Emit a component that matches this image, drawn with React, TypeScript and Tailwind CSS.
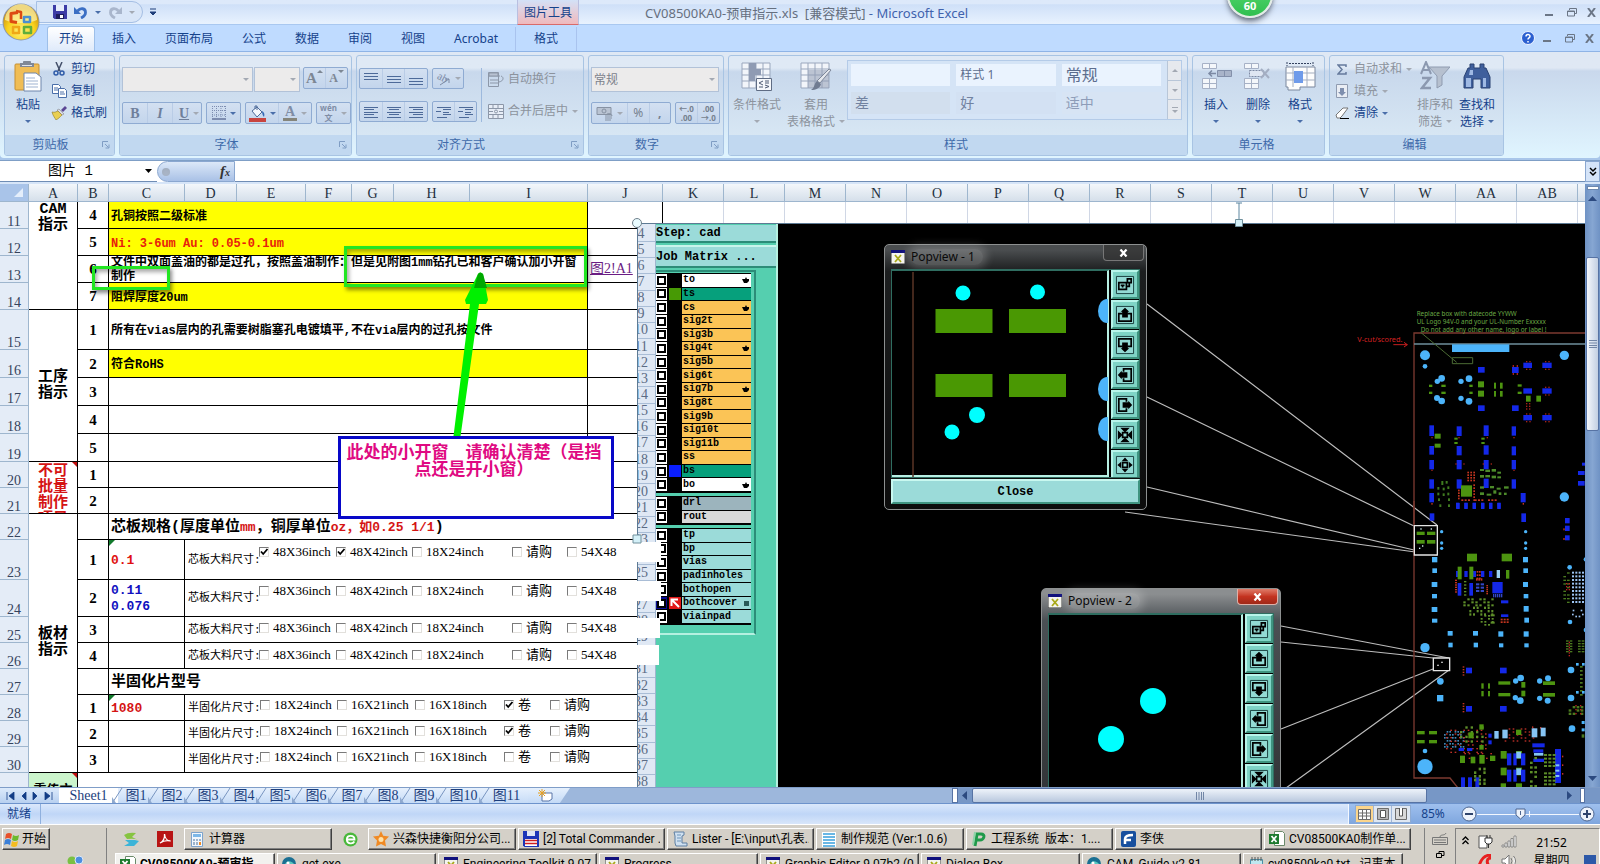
import React from "react";

const ui = "font-['Noto_Sans','Noto_Sans_CJK_SC',sans-serif]";
const cellFont = "font-['Liberation_Mono','Noto_Sans_CJK_SC',monospace]";
const serif = "font-['Liberation_Serif','Noto_Sans_CJK_SC',serif]";

/* ---------- small shared pieces ---------- */

const Caret = ({ className = "fill-[#4a6ea9]" }: { className?: string }) => (
  <svg width="6" height="3" viewBox="0 0 6 3" className={`shrink-0 ${className}`}>
    <path d="M0 0h6L3 3z" />
  </svg>
);

const dim = "fill-[#a3a9b3]";

const Lines = ({ rows }: { rows: number[][] }) => (
  <svg width="16" height="16" viewBox="0 0 16 16" className="shrink-0">
    {rows.map(([x, y, w], i) => (
      <rect key={i} x={x} y={y} width={w} height="1" fill="#4d6a99" />
    ))}
  </svg>
);

const Launcher = () => (
  <svg width="8" height="8" viewBox="0 0 8 8" fill="none" stroke="#7f9dc4" className="ml-1.5">
    <path d="M.5 6V.5H6M3 3l3.500 3.500M7 3.500V7H3.500" />
  </svg>
);

const Group = ({ label, className, launcher, children }: { label: string; className: string; launcher?: boolean; children: React.ReactNode }) => (
  <section className={`flex shrink-0 flex-col overflow-hidden rounded-[3px] border border-[#a8c4e3] bg-linear-to-b from-[#dfe9f5] from-12% via-[#c8d8ec] via-16% to-[#dcebf6] ${className}`}>
    <div className="min-h-0 flex-1">{children}</div>
    <div className="flex h-5 items-center bg-[#c1d8f0] pr-1 text-[12px] text-[#3e6aaa]">
      <h2 className="flex-1 text-center leading-5">{label}</h2>
      {launcher && <Launcher />}
    </div>
  </section>
);

const BtnBox = ({ className = "", children }: { className?: string; children: React.ReactNode }) => (
  <div className={`flex shrink-0 items-stretch divide-x divide-[#b9cce6] rounded-[2px] border border-[#8fabd2] bg-linear-to-b from-[#d3e0f1] to-[#c3d5ec] ${className}`}>{children}</div>
);

const IconBtn = ({ label, className = "", children }: { label: string; className?: string; children: React.ReactNode }) => (
  <button type="button" aria-label={label} className={`flex flex-1 items-center justify-center gap-1 ${className}`}>{children}</button>
);

const BigBtn = ({ icon, lines, muted, className, caretInline }: { icon: React.ReactNode; lines: string[]; muted?: boolean; className: string; caretInline?: boolean }) => (
  <button type="button" className={`flex shrink-0 flex-col items-center pt-1 text-[12px] leading-[17px] ${muted ? "text-[#8c939d]" : "text-[#15428b]"} ${className}`}>
    <span className="flex h-8 items-center">{icon}</span>
    <span className="mt-1 whitespace-nowrap">{lines[0]}</span>
    <span className="flex h-[17px] items-center gap-1 whitespace-nowrap">
      {lines[1]}
      {(caretInline || !lines[1]) && <Caret className={muted ? dim : "fill-[#4a6ea9]"} />}
    </span>
  </button>
);

const SmallBtn = ({ icon, text, muted, caret }: { icon: React.ReactNode; text: string; muted?: boolean; caret?: boolean }) => (
  <button type="button" className={`flex h-[22px] items-center gap-1 whitespace-nowrap text-[12px] leading-4 ${muted ? "text-[#8c939d]" : "text-[#15428b]"}`}>
    <span className="flex w-4 justify-center">{icon}</span>
    {text}
    {caret && <Caret className={muted ? dim : "fill-[#4a6ea9]"} />}
  </button>
);

/* ---------- ribbon icons ---------- */

const OfficeLogo = () => (
  <svg width="38" height="38" viewBox="0 0 38 38">
    <defs>
      <radialGradient id="orb" cx="50%" cy="75%" r="65%">
        <stop offset="0" stopColor="#fff27a" />
        <stop offset=".6" stopColor="#f8d11c" />
        <stop offset="1" stopColor="#c98f12" />
      </radialGradient>
    </defs>
    <circle cx="19" cy="19" r="18.5" fill="#8d98ab" />
    <circle cx="19" cy="19" r="17.5" fill="url(#orb)" />
    <path d="M3 17a16 16 0 0 1 32 0c-8 4-24 4-32 0z" fill="#fff6b0" opacity=".7" />
    <g fill="none" strokeWidth="3" strokeLinejoin="round">
      <path d="M16 9.500l-7 1v8l6 1" stroke="#dd4a12" />
      <path d="M14 8l5 1v7" stroke="#dd4a12" strokeWidth="2.500" />
      <path d="M22 14h6v5h-6z" stroke="#4b8fd0" strokeWidth="2.500" />
      <path d="M11 24h6v6h-6z" stroke="#f0a818" strokeWidth="2.500" />
      <path d="M22 24h7v6h-7z" stroke="#5fae3c" strokeWidth="2.500" />
    </g>
  </svg>
);

const Floppy = ({ size = 14 }: { size?: number }) => (
  <svg width={size} height={size} viewBox="0 0 14 14">
    <path d="M0 0h14v14H1.500L0 12.500z" fill="#3c3ca6" />
    <path d="M3 0h8v6H3z" fill="#e8eefb" />
    <path d="M3 9h8v5H3z" fill="#1d1d5c" />
    <path d="M7 10h3v3H7z" fill="#fff" />
  </svg>
);

const Undo = ({ flip, color }: { flip?: boolean; color: string }) => (
  <svg width="14" height="13" viewBox="0 0 14 13" className={flip ? "-scale-x-100" : ""}>
    <path d="M0 1v7h7z" fill={color} />
    <path d="M3.500 5C6.500 1.500 11.500 2 11.500 6.500c0 2.500-1.500 4-4.500 5.500" fill="none" stroke={color} strokeWidth="2.800" />
  </svg>
);

const PasteIcon = () => (
  <svg width="28" height="31" viewBox="0 0 28 31">
    <rect x="1" y="3" width="24" height="26" rx="1" fill="#f0bd55" stroke="#c58f33" />
    <path d="M6 2h3a4 4 0 0 1 8 0h3v4H6z" fill="#7f8896" />
    <path d="M8 4h10v1H8z" fill="#dfe4ec" />
    <path d="M10 12h12l5 4v14H10z" fill="#fff" stroke="#6f86ac" />
    <path d="M12 17h9M12 20h12M12 23h12M12 26h12" stroke="#9fb3d1" />
  </svg>
);

const Scissors = () => (
  <svg width="12" height="14" viewBox="0 0 12 14" fill="none" stroke="#2f5ba8">
    <path d="M3 0l4 9M9 0L5 9" stroke="#44506a" strokeWidth="1.500" />
    <circle cx="3" cy="11" r="2" strokeWidth="1.500" />
    <circle cx="9" cy="11" r="2" strokeWidth="1.500" />
  </svg>
);

const CopyIcon = () => (
  <svg width="15" height="14" viewBox="0 0 15 14" fill="#fff" stroke="#4a6ea9">
    <path d="M.5.500h6l2 2v7h-8z" />
    <path d="M2 4h4M2 6h4" />
    <path d="M6.500 4.500h6l2 2v7h-8z" />
    <path d="M8 8h4M8 10h5" />
  </svg>
);

const Brush = () => (
  <svg width="16" height="14" viewBox="0 0 16 14">
    <path d="M10 4l4-4 2 2-4 4z" fill="#5b4694" />
    <path d="M8 3l5 5-2 1-5-5z" fill="#d9d9e8" stroke="#777" strokeWidth=".5" />
    <path d="M1 6c3 1 5-1 6-1l4 4c-2 2-4 4-6 5-1-2-3-4-4-8z" fill="#e9cf52" stroke="#8f7b26" strokeWidth=".6" />
  </svg>
);

const Bucket = () => (
  <svg width="17" height="17" viewBox="0 0 17 17">
    <path d="M3 6l5-4 5 5-5 5z" fill="#f5f8fd" stroke="#4d6a99" />
    <path d="M6 4V1h2v4" fill="none" stroke="#4d6a99" />
    <path d="M13 6c2 1 3 3 2 6-1-1-2-3-2-6z" fill="#3469b5" />
    <rect x="0" y="13" width="17" height="4" fill="#c8443f" />
  </svg>
);

const GridIcon = ({ brush }: { brush?: boolean }) => (
  <svg width="32" height="30" viewBox="0 0 32 30">
    <path d="M1 2h28v25H1z" fill="#f2f5fa" stroke="#9aa7bd" />
    <path d="M8 2v25M15 2v25M22 2v25M1 8h28M1 14h28M1 20h28" stroke="#9aa7bd" />
    {brush ? (
      <>
        <path d="M8 9h21v18H8z" fill="#8f9bb3" opacity=".55" />
        <path d="M31 9L20 22l-3-2L29 8z" fill="#e3e6ec" stroke="#7d879a" />
        <path d="M17 20l4 3c-1 4-5 6-10 6 4-2 3-7 6-9z" fill="#707b91" />
      </>
    ) : (
      <>
        <path d="M8 2h7v6h5v6h-6v6H8z" fill="#8f9bb3" />
        <path d="M15.500 17.500h15v12h-15z" fill="#f6f8fb" stroke="#5f6c84" />
        <path d="M22 20l-4 2 4 2M18 26h4M24 20h4M24 22h4M24 24l4 1.500L24 27" fill="none" stroke="#4e5a73" />
      </>
    )}
  </svg>
);

const CellsIcon = ({ kind }: { kind: "insert" | "delete" | "format" }) => (
  <svg width="31" height="30" viewBox="0 0 31 30">
    {kind === "format" ? (
      <>
        <path d="M2 1v4M28 1v4M4 2.500h22" stroke="#33415e" strokeDasharray="2 1" />
        <path d="M1 6h29v20H15v3H3v-3H1z" fill="#fdfdfd" stroke="#7b879d" />
        <path d="M8 6v20M22 6v20M1 12h29M1 19h29" stroke="#a3adbf" />
        <path d="M9 10h9v12H9z" fill="#6f9bea" />
      </>
    ) : (
      <>
        <path d="M1.500 2.500h14v5h-14zM1.500 17.500h14v10h-14zM8.500 2.500v5M8.500 17.500v10M1.500 22.500h14" fill="#f4f7fb" stroke="#a6b1c6" />
        {kind === "insert" ? (
          <>
            <path d="M16.500 9.500h14v6h-14zM23.500 9.500v6" fill="#a9b4c9" stroke="#8390aa" />
            <path d="M15 12.500H8m3-3l-3 3 3 3" fill="none" stroke="#7c89a3" strokeWidth="1.500" />
          </>
        ) : (
          <>
            <path d="M6.500 9.500h14v6h-14z" fill="#dfe6f2" stroke="#7c89a3" strokeDasharray="2 1" />
            <path d="M18 8l8 9M26 8l-8 9" stroke="#a4aec2" strokeWidth="2" />
          </>
        )}
      </>
    )}
  </svg>
);

const SortIcon = () => (
  <svg width="30" height="30" viewBox="0 0 30 30">
    <path d="M1 13L6 1l5 12M3 9h6" fill="none" stroke="#8c99b0" strokeWidth="2" />
    <path d="M2 17h8L2 27h9" fill="none" stroke="#8c99b0" strokeWidth="2.500" />
    <path d="M9 6h21l-8 9v9l-5 3V15z" fill="#b6c0cf" stroke="#8f9bb0" />
  </svg>
);

const Binoculars = () => (
  <svg width="28" height="26" viewBox="0 0 28 26">
    <path d="M7 1h4v4h6V1h4v4h2l4 9v11h-9v-9h-8v9H1V14l4-9h2z" fill="#3f5f9c" stroke="#2a4272" />
    <path d="M3 15h5v9H3zM20 15h3v9h-3zM7 7h3v5H6z" fill="#9fb9e3" />
  </svg>
);

/* ---------- title and tabs ---------- */

const TitleBar = () => (
  <header className="relative flex h-[25px] shrink-0 items-center border-b border-[#a9c8f0] bg-linear-to-b from-[#dde9fa] from-15% via-[#cfe0f8] via-20% to-[#e8f2fe]">
    <div className="absolute left-0.5 top-[3px] z-10 rounded-full">
      <button type="button" aria-label="Office" className="block rounded-full">
        <OfficeLogo />
      </button>
    </div>
    <div className="ml-9 flex h-[22px] w-[107px] items-center gap-[7px] rounded-r-full border border-[#a5bfe4] bg-[#d9e6f8] pl-4">
      <Floppy />
      <Undo color="#3c6fc4" />
      <Caret />
      <Undo flip color="#a9b6cc" />
      <Caret className={dim} />
    </div>
    <svg width="8" height="8" viewBox="0 0 8 8" className="ml-1.5">
      <path d="M1 1h6M1 4h6L4 7z" stroke="#1f3f7a" fill="#1f3f7a" strokeWidth="1" />
    </svg>
    <div className="absolute left-[517px] top-0 h-[25px] w-[62px] border-x border-b border-b-[#d86a6a] border-x-[#b9bfe0] bg-linear-to-b from-[#d3e1f7] to-[#efb9bd] text-center text-[12px] leading-[25px] text-[#15428b]">图片工具</div>
    <h1 className="absolute left-[645px] top-0 whitespace-pre text-[13px] leading-[27px] text-[#66707f]">
      CV08500KA0-预审指示.xls&nbsp; [兼容模式] <span className="text-[#4163ad]">- Microsoft Excel</span>
    </h1>
    <div className="absolute left-[1227px] top-[-28px] flex h-[46px] w-[46px] items-end justify-center rounded-full border-2 border-[#e4ece6] bg-linear-to-b from-[#5fe07a] to-[#2fbf4f] pb-0.5 text-[11px] font-bold leading-4 text-white shadow-md shadow-gray-500">60</div>
    <div className="ml-auto">
      <WinBtns />
    </div>
  </header>
);

const WinBtns = () => (
  <div className="flex items-center gap-2.5 pr-1">
    <button type="button" aria-label="Minimize" className="flex h-3 w-3 items-end"><span className="mb-0.5 h-0.5 w-2 bg-[#6b7686]" /></button>
    <button type="button" aria-label="Restore">
      <svg width="10" height="9" viewBox="0 0 10 9" fill="none" stroke="#6b7686"><path d="M2.500 2V.500h7v5H8M.5 3h7v5h-7zM0 3.500h8" /></svg>
    </button>
    <button type="button" aria-label="Close">
      <svg width="9" height="9" viewBox="0 0 9 9"><path d="M1 0l7 9M8 0L1 9" stroke="#6b7686" strokeWidth="2" /></svg>
    </button>
  </div>
);

const TabRow = () => (
  <nav className="flex h-[27px] shrink-0 items-end gap-[5px] border-b border-[#8fb4e6] bg-[#bfdbff] pl-[47px] text-[12px] leading-6 text-[#15428b]">
    <a href="#home" className="h-[25px] rounded-t-[3px] border border-b-0 border-[#9dbfe9] bg-linear-to-b from-white to-[#dfeafa] px-[11px] text-[#15428b]">开始</a>
    {["插入", "页面布局", "公式", "数据", "审阅", "视图", "Acrobat"].map((t) => (
      <a key={t} href="#tab" className="px-3">{t}</a>
    ))}
    <a href="#format" className="w-[62px] border-x border-[#a9c3ee] text-center">格式</a>
    <div className="ml-auto flex h-[26px] items-center gap-2 pr-0.5">
      <svg width="14" height="14" viewBox="0 0 14 14">
        <circle cx="7" cy="7" r="6.500" fill="#2b5fd0" stroke="#f0f4ff" />
        <path d="M5 5.500C5 3 9 3 9 5.300 9 7 7 6.800 7 8.500M7 10v1.500" stroke="#fff" strokeWidth="1.500" fill="none" />
      </svg>
      <WinBtns />
    </div>
  </nav>
);

/* ---------- ribbon ---------- */

const GalleryCell = ({ children, className = "" }: { children?: React.ReactNode; className?: string }) => (
  <button type="button" className={`flex h-[22px] items-center pl-1 text-left leading-5 ${className}`}>{children}</button>
);

const Ribbon = () => (
  <div className="flex h-[109px] shrink-0 border-b border-[#7f9fc6] bg-[#a9c6ea] pb-0.5">
    <div className="flex min-w-0 flex-1 gap-1 overflow-hidden rounded-b-[4px] bg-linear-to-b from-[#dfe8f4] from-15% via-[#c9d8ec] via-18% to-[#e0f5ff] pb-0.5 pl-1 pt-[3px]">
      <Group label="剪贴板" launcher className="w-[111px]">
        <div className="flex">
          <BigBtn icon={<PasteIcon />} lines={["粘贴"]} className="w-[46px]" />
          <div className="flex flex-col pt-0.5">
            <SmallBtn icon={<Scissors />} text="剪切" />
            <SmallBtn icon={<CopyIcon />} text="复制" />
            <SmallBtn icon={<Brush />} text="格式刷" />
          </div>
        </div>
      </Group>

      <Group label="字体" launcher className="w-[233px]">
        <div className="flex flex-col gap-2.5 pl-0.5 pt-[11px]">
          <div className="flex h-[25px] items-start gap-px">
            <div className="relative w-[131px]">
              <select aria-label="字体" className="block h-[25px] w-full appearance-none border border-[#b2c2d8] bg-[#ecebeb]"><option> </option></select>
              <span className="pointer-events-none absolute right-1 top-[11px]"><Caret className={dim} /></span>
            </div>
            <div className="relative w-[46px]">
              <select aria-label="字号" className="block h-[25px] w-full appearance-none border border-[#b2c2d8] bg-[#ecebeb]"><option> </option></select>
              <span className="pointer-events-none absolute right-1 top-[11px]"><Caret className={dim} /></span>
            </div>
            <BtnBox className="ml-0.5 h-[22px] w-[45px]">
              <IconBtn label="增大字号"><span className={`${serif} flex text-[15px] font-bold leading-4 text-[#7d8794]`}>A<Caret className="rotate-180 fill-[#7d8794]" /></span></IconBtn>
              <IconBtn label="减小字号"><span className={`${serif} flex text-[12px] font-bold leading-4 text-[#7d8794]`}>A<Caret className="fill-[#7d8794]" /></span></IconBtn>
            </BtnBox>
          </div>
          <div className={`${serif} flex h-[22px] gap-1 text-[14px] font-bold text-[#6f7f9b]`}>
            <BtnBox className="w-[80px]">
              <IconBtn label="加粗">B</IconBtn>
              <IconBtn label="倾斜"><i>I</i></IconBtn>
              <IconBtn label="下划线" className="pl-1"><u>U</u><Caret className={dim} /></IconBtn>
            </BtnBox>
            <BtnBox className="w-[35px]">
              <IconBtn label="边框">
                <svg width="14" height="14" viewBox="0 0 14 14" fill="none" stroke="#7d8db0"><path d="M.5 0v12M4.500 0v12M9 0v12M13.500 0v12M0 .500h14M0 4.500h14M0 9h14" strokeDasharray="1 1" /><path d="M0 13h14" strokeWidth="2" /></svg>
                <Caret />
              </IconBtn>
            </BtnBox>
            <BtnBox className="w-[67px]">
              <IconBtn label="填充颜色"><Bucket /><Caret /></IconBtn>
              <IconBtn label="字体颜色"><span className="border-b-[3px] border-[#85857b] px-0.5 leading-[13px] text-[#7f8da6]">A</span><Caret className={dim} /></IconBtn>
            </BtnBox>
            <BtnBox className="w-[35px]">
              <IconBtn label="拼音"><span className={`${ui} flex flex-col text-[8px] font-bold leading-[10px] text-[#7f8da6]`}><span>wén</span><span className="text-center">文</span></span><Caret className={dim} /></IconBtn>
            </BtnBox>
          </div>
        </div>
      </Group>

      <Group label="对齐方式" launcher className="w-[228px]">
        <div className="flex pl-0.5 pt-3">
          <div className="flex flex-col gap-3">
            <div className="flex h-[21px] gap-1">
              <BtnBox className="w-[69px]">
                <IconBtn label="顶端对齐"><Lines rows={[[1, 2, 14], [1, 5, 14], [1, 8, 14]]} /></IconBtn>
                <IconBtn label="垂直居中"><Lines rows={[[1, 5, 14], [1, 8, 14], [1, 11, 14]]} /></IconBtn>
                <IconBtn label="底端对齐"><Lines rows={[[1, 7, 14], [1, 10, 14], [1, 13, 14]]} /></IconBtn>
              </BtnBox>
              <BtnBox className="w-8">
                <IconBtn label="方向">
                  <svg width="15" height="14" viewBox="0 0 15 14" fill="none" stroke="#7d8aa5"><text x="1" y="8" transform="rotate(28 4 6)" fontSize="11" fill="#7d8aa5" stroke="none" fontFamily="Liberation Serif">ab</text><path d="M4 13l9-6m-4 0h4v4" /></svg>
                  <Caret className={dim} />
                </IconBtn>
              </BtnBox>
            </div>
            <div className="flex h-[21px] gap-1">
              <BtnBox className="w-[69px]">
                <IconBtn label="左对齐"><Lines rows={[[1, 3, 14], [1, 5, 10], [1, 8, 14], [1, 10, 10], [1, 13, 14]]} /></IconBtn>
                <IconBtn label="居中"><Lines rows={[[1, 3, 14], [3, 5, 10], [1, 8, 14], [3, 10, 10], [1, 13, 14]]} /></IconBtn>
                <IconBtn label="右对齐"><Lines rows={[[1, 3, 14], [5, 5, 10], [1, 8, 14], [5, 10, 10], [1, 13, 14]]} /></IconBtn>
              </BtnBox>
              <BtnBox className="w-[45px]">
                <IconBtn label="减少缩进"><Lines rows={[[1, 3, 14], [7, 5, 8], [0, 7, 5], [7, 8, 6], [7, 10, 8], [1, 13, 10]]} /></IconBtn>
                <IconBtn label="增加缩进"><Lines rows={[[1, 3, 14], [7, 5, 8], [0, 7, 5], [7, 8, 6], [7, 10, 8], [1, 13, 10]]} /></IconBtn>
              </BtnBox>
            </div>
          </div>
          <div className="ml-1 border-l border-[#9db9dd] pl-1.5">
            <div className="flex flex-col gap-2.5">
              <SmallBtn muted text="自动换行" icon={<svg width="16" height="15" viewBox="0 0 16 15" fill="none" stroke="#8c97a8"><path d="M.5.500h10v14H.5zM0 4h12M2 8h8M2 11h8M13 4c3 1 3 5-2 6" strokeWidth="1" /><path d="M1 1h9v3H1z" fill="#b8c2d2" /></svg>} />
              <SmallBtn muted caret text="合并后居中" icon={<svg width="16" height="15" viewBox="0 0 16 15" fill="#e7edf6" stroke="#8c97a8"><path d="M.5.500h15v14H.5zM.5 4.500h15M.5 10.500h15M5 .500v4M10 .500v4M5 10.500v4M10 10.500v4M1 7.500h4M11 7.500h4" /><circle cx="8" cy="7.500" r="1.500" fill="none" /></svg>} />
            </div>
          </div>
        </div>
      </Group>

      <Group label="数字" launcher className="w-[136px]">
        <div className="flex flex-col gap-2.5 pl-0.5 pt-[11px]">
          <div className="relative w-[128px]">
            <select aria-label="数字格式" className="block h-[25px] w-full appearance-none border border-[#b2c2d8] bg-[#ecebeb] pl-0.5 text-[12px] leading-5 text-[#7c828c]"><option>常规</option></select>
            <span className="pointer-events-none absolute right-1 top-[11px]"><Caret className={dim} /></span>
          </div>
          <div className="flex h-[22px] gap-1 text-[12px] text-[#76818f]">
            <BtnBox className="w-[80px]">
              <IconBtn label="会计数字格式" className="px-1">
                <svg width="17" height="15" viewBox="0 0 17 15" fill="none" stroke="#8792a3"><path d="M1 1.500h14v7H1z" fill="#b9c3d2" /><circle cx="8" cy="5" r="2" /><path d="M9 10h7M9 12h7M9 14h6M11 8c3-1 5 0 5 2" /></svg>
                <Caret className={dim} />
              </IconBtn>
              <IconBtn label="百分比">%</IconBtn>
              <IconBtn label="千位分隔"><b>,</b></IconBtn>
            </BtnBox>
            <BtnBox className="w-[45px] text-[8px] font-bold leading-[9px]">
              <IconBtn label="增加小数位"><span>←.0<br />.00</span></IconBtn>
              <IconBtn label="减少小数位"><span>.00<br />→.0</span></IconBtn>
            </BtnBox>
          </div>
        </div>
      </Group>

      <Group label="样式" className="w-[460px]">
        <div className="flex">
          <BigBtn muted icon={<GridIcon />} lines={["条件格式"]} className="w-14" />
          <BigBtn muted caretInline icon={<GridIcon brush />} lines={["套用", "表格格式"]} className="w-[62px]" />
          <div className="mt-1 flex h-[60px] w-[335px] border border-[#b4cbe8] bg-[#d5e4f6]">
            <div className="grid flex-1 grid-cols-3 content-start gap-x-1.5 gap-y-1.5 p-[3px] pr-1.5 text-[#5d6e8e]">
              <GalleryCell className="bg-[#eaf3fe]" />
              <GalleryCell className="bg-[#eaf3fe] text-[12px]">样式 1</GalleryCell>
              <GalleryCell className="bg-[#eaf3fe] text-[16px]">常规</GalleryCell>
              <GalleryCell className="bg-[#d2dfee] text-[14px] text-[#7182a0]">差</GalleryCell>
              <GalleryCell className="bg-[#d3e1f3] text-[14px] text-[#7182a0]">好</GalleryCell>
              <GalleryCell className="bg-[#d7e4f4] text-[14px] text-[#8d9cb8]">适中</GalleryCell>
            </div>
            <div className="flex w-[14px] flex-col divide-y divide-[#b8c6d8] border-l border-[#b8c6d8] bg-[#e6e9ee]">
              <button type="button" aria-label="上一行" className="flex flex-1 items-center justify-center"><Caret className="rotate-180 fill-[#a3a9b3]" /></button>
              <button type="button" aria-label="下一行" className="flex flex-1 items-center justify-center"><Caret className={dim} /></button>
              <button type="button" aria-label="其他" className="flex flex-1 flex-col items-center justify-center gap-0.5"><span className="h-px w-1.5 bg-[#a3a9b3]" /><Caret className={dim} /></button>
            </div>
          </div>
        </div>
      </Group>

      <Group label="单元格" className="w-[133px]">
        <div className="flex pl-0.5">
          <BigBtn icon={<CellsIcon kind="insert" />} lines={["插入"]} className="w-[42px]" />
          <BigBtn icon={<CellsIcon kind="delete" />} lines={["删除"]} className="w-[42px]" />
          <BigBtn icon={<CellsIcon kind="format" />} lines={["格式"]} className="w-[42px]" />
        </div>
      </Group>

      <Group label="编辑" className="w-[175px]">
        <div className="flex pl-1">
          <div className="flex w-20 flex-col items-start pt-0.5">
            <SmallBtn muted caret text="自动求和" icon={<svg width="10" height="11" viewBox="0 0 10 11"><path d="M9 3V1H1l4 4.500L1 10h8V8" fill="none" stroke="#667a9c" strokeWidth="1.500" /></svg>} />
            <SmallBtn muted caret text="填充" icon={<svg width="12" height="14" viewBox="0 0 12 14"><path d="M.5.500h11v13H.5z" fill="#e9edf4" stroke="#8f9bb0" /><path d="M4 4h4v4h2l-4 4-4-4h2z" fill="#7f8fae" /></svg>} />
            <SmallBtn caret text="清除" icon={<svg width="14" height="12" viewBox="0 0 14 12"><path d="M1 8l7-7h5l-6 8-2 2H2z" fill="#fff" stroke="#777" /><path d="M5 11.500h9" stroke="#000" /></svg>} />
          </div>
          <BigBtn muted caretInline icon={<SortIcon />} lines={["排序和", "筛选"]} className="w-[42px]" />
          <BigBtn caretInline icon={<Binoculars />} lines={["查找和", "选择"]} className="w-[42px]" />
        </div>
      </Group>
    </div>
  </div>
);

const FormulaBar = () => (
  <div className="flex h-[23px] shrink-0 items-stretch border-b-2 border-[#d6e5f8] bg-white">
    <div className="flex w-[157px] items-center border-b border-[#6f8db5] pl-12 pr-[5px]">
      <input aria-label="名称框" defaultValue="图片 1" className={`min-w-0 flex-1 bg-transparent text-[14px] leading-4 text-black outline-none ${cellFont}`} />
      <svg width="7" height="4" viewBox="0 0 7 4"><path d="M0 0h7L3.500 4z" /></svg>
    </div>
    <div className="flex w-[78px] items-center justify-between rounded-l-full border border-[#8aa7d0] bg-linear-to-b from-[#dce8f8] to-[#a9c1e6] px-1">
      <span className="h-2 w-2 rounded-full bg-[#aab6c8] shadow-inner" />
      <button type="button" aria-label="插入函数" className={`${serif} flex items-center pb-0.5 text-[15px] font-bold italic leading-4 text-[#333]`}>f<span className="pt-1 text-[10px] leading-3">x</span></button>
    </div>
    <input aria-label="编辑栏" className="min-w-0 flex-1 border-b border-[#6f8db5] bg-white outline-none" />
    <button type="button" aria-label="展开编辑栏" className="flex w-[15px] items-center justify-center border border-[#8aa7d0] bg-[#d5e4f8]">
      <svg width="8" height="10" viewBox="0 0 8 10" fill="none" stroke="#000" strokeWidth="1.500"><path d="M1 1l3 3 3-3M1 5l3 3 3-3" /></svg>
    </button>
  </div>
);

/* ---------- worksheet ---------- */

const k = "border-black";
const num = `border-b border-r ${k} p-0 text-center ${serif} text-[15px] font-bold leading-5`;

const RowHead = ({ n }: { n: number | string }) => (
  <th scope="row" className={`border-b border-r border-[#9eb6ce] bg-[#e4ecf7] p-0 align-bottom text-[14px] font-normal leading-[13px] text-[#35435c] ${serif}`}>{n}</th>
);

const Side = ({ span, children, className = "text-black", align = "align-middle" }: { span: number; children: React.ReactNode; className?: string; align?: string }) => (
  <td rowSpan={span} className={`overflow-hidden border-b border-r ${k} p-0 text-center ${align} text-[15px] font-bold leading-4 ${cellFont} ${className}`}>{children}</td>
);

const Filler = () => (
  <>
    {Array.from({ length: 16 }, (_, i) => (
      <td key={i} className="border-b border-r border-[#d0d7e5] p-0" />
    ))}
  </>
);

const Wide = ({ children, className = "bg-white pt-0 text-black" }: { children?: React.ReactNode; className?: string }) => (
  <td colSpan={7} className={`border-b border-r ${k} px-0 pb-0 pl-0.5 text-[12px] font-bold leading-[14px] ${cellFont} ${className}`}>{children}</td>
);

const J = ({ children }: { children?: React.ReactNode }) => <td className={`border-b border-r ${k} p-0 pl-0.5 ${serif} text-[14px] leading-4`}>{children}</td>;

const Spec = ({ value, label, color }: { value?: React.ReactNode; label: string; color?: string }) => (
  <>
    <td className={`relative border-b border-r ${k} p-0 pl-0.5 pt-0.5 text-[13px] font-bold leading-4 ${cellFont} ${color ?? ""}`}>{value}</td>
    <td colSpan={7} className={`border-b ${k} p-0 pl-[3px] text-[11px] leading-4 ${cellFont}`}>{label}</td>
  </>
);

const Mark = () => (
  <svg width="6" height="6" viewBox="0 0 6 6" className="absolute left-0 top-0"><path d="M0 0h6L0 6z" fill="#127a2c" /></svg>
);

const colLetters = ["A", "B", "C", "D", "E", "F", "G", "H", "I", "J", "K", "L", "M", "N", "O", "P", "Q", "R", "S", "T", "U", "V", "W", "AA", "AB", ""];

const Grid = () => (
  <table className="w-max table-fixed border-separate border-spacing-0 bg-white">
    <colgroup>
      <col className="w-[29px]" /><col className="w-[49px]" /><col className="w-[31px]" /><col className="w-[76px]" /><col className="w-[52px]" /><col className="w-[69px]" /><col className="w-[46px]" /><col className="w-[42px]" /><col className="w-[76px]" /><col className="w-[118px]" /><col className="w-[75px]" />
      {Array.from({ length: 16 }, (_, i) => <col key={i} className="w-[61px]" />)}
    </colgroup>
    <thead>
      <tr className="h-[18px]">
        <th className="border-b border-r border-[#9eb6ce] bg-[#a9c4e9] p-0">
          <svg width="24" height="12" viewBox="0 0 24 12"><path d="M23 1v9H14z" fill="#e4eefb" /></svg>
        </th>
        {colLetters.map((c, i) => (
          <th key={i} scope="col" className={`border-b border-r border-[#9eb6ce] bg-linear-to-b from-[#f3f7fb] to-[#d5dfea] p-0 pt-[3px] text-[14px] font-normal leading-[14px] text-[#1f3040] ${serif}`}>{c}</th>
        ))}
      </tr>
    </thead>
    <tbody>
      <tr className="h-[27px]">
        <RowHead n={11} />
        <Side span={4} align="align-top">CAM<br />指示</Side>
        <td className={num}>4</td><Wide className="bg-[#ffff00] pt-[3px]">孔铜按照二级标准</Wide><J /><Filler />
      </tr>
      <tr className="h-[27px]"><RowHead n={12} /><td className={num}>5</td><Wide className="bg-[#ffff00] pt-[3px] text-[#e8200c]">Ni: 3-6um Au: 0.05-0.1um</Wide><J /></tr>
      <tr className="h-[27px]">
        <RowHead n={13} /><td className={num}>6</td>
        <Wide><div className="h-[26px] overflow-hidden whitespace-nowrap leading-[14px]">文件中双面盖油的都是过孔，按照盖油制作：但是见附图1mm钻孔已和客户确认加小开窗<br />制作</div></Wide>
        <J><a href="#fig2" className="text-[#6b1d84] underline">图2!A1</a></J>
      </tr>
      <tr className="h-[27px]"><RowHead n={14} /><td className={num}>7</td><Wide className="bg-[#ffff00] pt-[3px]">阻焊厚度20um</Wide><J /></tr>
      <tr className="h-[40px]"><RowHead n={15} /><Side span={5}>工序<br />指示</Side><td className={num}>1</td><Wide className="pt-0.5">所有在vias层内的孔需要树脂塞孔电镀填平,不在via层内的过孔按文件</Wide><J /></tr>
      <tr className="h-[28px]"><RowHead n={16} /><td className={num}>2</td><Wide className="bg-[#ffff00] pt-0.5">符合RoHS</Wide><J /></tr>
      <tr className="h-[28px]"><RowHead n={17} /><td className={num}>3</td><Wide /><J /></tr>
      <tr className="h-[28px]"><RowHead n={18} /><td className={num}>4</td><Wide /><J /></tr>
      <tr className="h-[28px]"><RowHead n={19} /><td className={num}>5</td><Wide /><J /></tr>
      <tr className="h-[26px]">
        <RowHead n={20} />
        <Side span={2} className="relative text-[#d51414]" align="align-top">
          <div className="h-[51px] overflow-hidden pt-0.5">不可<br />批量<br />制作<br />项目</div>
          <svg width="5" height="5" viewBox="0 0 5 5" className="absolute right-0 top-0"><path d="M0 0h5v5z" fill="#c01010" /></svg>
        </Side>
        <td className={num}>1</td><Wide /><J />
      </tr>
      <tr className="h-[26px]"><RowHead n={21} /><td className={num}>2</td><Wide /><J /></tr>
      <tr className="h-[26px]">
        <RowHead n={22} /><Side span={9}>板材<br />指示</Side><td className={num} />
        <td colSpan={8} className={`border-b ${k} whitespace-nowrap p-0 pl-0.5 pt-0.5 text-[15px] font-bold leading-5 ${cellFont}`}>
          芯板规格(厚度单位<span className="text-[13px] text-[#d51414]">mm</span>，铜厚单位<span className="text-[13px] text-[#d51414]">oz，如0.25 1/1</span>)
        </td>
      </tr>
      <tr className="h-[40px]"><RowHead n={23} /><td className={num}>1</td><Spec color="text-[#e01010]" value={<><Mark />0.1</>} label="芯板大料尺寸:" /></tr>
      <tr className="h-[37px]"><RowHead n={24} /><td className={num}>2</td><Spec color="text-[#1010c0]" value={<>0.11<br />0.076</>} label="芯板大料尺寸:" /></tr>
      <tr className="h-[26px]"><RowHead n={25} /><td className={num}>3</td><Spec label="芯板大料尺寸:" /></tr>
      <tr className="h-[26px]"><RowHead n={26} /><td className={num}>4</td><Spec label="芯板大料尺寸:" /></tr>
      <tr className="h-[26px]"><RowHead n={27} /><td className={num} /><td colSpan={8} className={`border-b ${k} p-0 pl-0.5 pt-0.5 text-[15px] font-bold leading-5 ${cellFont}`}>半固化片型号</td></tr>
      <tr className="h-[26px]"><RowHead n={28} /><td className={num}>1</td><Spec color="text-[#d51414]" value={<><Mark />1080</>} label="半固化片尺寸:" /></tr>
      <tr className="h-[26px]"><RowHead n={29} /><td className={num}>2</td><Spec label="半固化片尺寸:" /></tr>
      <tr className="h-[26px]"><RowHead n={30} /><td className={num}>3</td><Spec label="半固化片尺寸:" /></tr>
      <tr className="h-[30px]">
        <RowHead n="" />
        <td className={`relative border-r ${k} bg-[#ccf5cc] p-0 pt-2 text-center align-top text-[13px] font-bold leading-4`}>
          重传文
          <svg width="5" height="5" viewBox="0 0 5 5" className="absolute right-0 top-0"><path d="M0 0h5v5z" fill="#c01010" /></svg>
        </td>
        <td colSpan={9} />
      </tr>
    </tbody>
  </table>
);

const Check = ({ label, on, className = "" }: { label: string; on?: boolean; className?: string }) => (
  <label className={`flex items-center gap-1 whitespace-nowrap ${className}`}>
    <span className="relative flex">
      <input type="checkbox" defaultChecked={on} className="h-2.5 w-2.5 appearance-none border border-[#e2e0dc] border-l-[#7a7a7a] border-t-[#7a7a7a] bg-white" />
      {on && <svg width="10" height="10" viewBox="0 0 10 10" className="pointer-events-none absolute left-0 top-0"><path d="M2 4.500l2.200 2.500L8.500 2" fill="none" stroke="#000" strokeWidth="1.800" /></svg>}
    </span>
    {label}
  </label>
);

const sizes = ["48X36inch", "48X42inch", "18X24inch", "请购", "54X48"];
const prepregs = ["18X24inch", "16X21inch", "16X18inch", "卷", "请购"];

const controlRows = [
  { top: "top-[358px]", w: "w-[402px]", on: [0, 1] },
  { top: "top-[397px]", w: "w-[402px]", on: [] },
  { top: "top-[434px]", w: "w-[401px]", on: [] },
  { top: "top-[461px]", w: "w-[400px]", on: [] },
];
const prepregRows = [
  { top: "top-[511px]", on: [3] },
  { top: "top-[537px]", on: [3] },
  { top: "top-[563px]", on: [] },
];

const Controls = () => (
  <div className={`${serif} text-[13px] leading-5 text-black`}>
    {controlRows.map((r, i) => (
      <div key={i} className={`absolute left-[259px] grid h-5 grid-cols-[77px_76px_100px_55px_auto] justify-start bg-white ${r.top} ${r.w}`}>
        {sizes.map((s, j) => <Check key={j} label={s} on={(r.on as number[]).includes(j)} />)}
      </div>
    ))}
    {prepregRows.map((r, i) => (
      <div key={i} className={`absolute left-[260px] grid h-5 w-[370px] grid-cols-[77px_78px_89px_46px_auto] justify-start ${r.top}`}>
        {prepregs.map((s, j) => <Check key={j} label={s} on={(r.on as number[]).includes(j)} />)}
      </div>
    ))}
  </div>
);

/* ---------- embedded picture: layer list ---------- */

type Layer = { n: string; bg: string; chip?: string; hand?: boolean };
const O = "bg-[#fbc456]";
const T = "bg-[#9bdbd9]";
const layers: Layer[] = [
  { n: "to", bg: "bg-white", hand: true },
  { n: "ts", bg: "bg-[#06a07c]", chip: "bg-[#479a05]" },
  { n: "cs", bg: O, hand: true }, { n: "sig2t", bg: O }, { n: "sig3b", bg: O }, { n: "sig4t", bg: O, hand: true }, { n: "sig5b", bg: O }, { n: "sig6t", bg: O }, { n: "sig7b", bg: O, hand: true }, { n: "sig8t", bg: O }, { n: "sig9b", bg: O }, { n: "sig10t", bg: O }, { n: "sig11b", bg: O }, { n: "ss", bg: O },
  { n: "bs", bg: "bg-[#06a07c]", chip: "bg-[#0a1eff]" },
  { n: "bo", bg: "bg-white", hand: true },
];
const drills: Layer[] = [{ n: "drl", bg: "bg-[#9cb4bd]" }, { n: "rout", bg: "bg-[#d9d9d9]" }];
const others: Layer[] = ["tp", "bp", "vias", "padinholes", "bothopen", "bothcover", "viainpad"].map((n) => ({ n, bg: T, chip: n === "bothcover" ? "bg-[#e01818]" : undefined }));

const LayerBlock = ({ list, className }: { list: Layer[]; className: string }) => (
  <div className={`flex flex-col border-y border-black bg-black ${className}`}>
    {list.map((l) => (
      <label key={l.n} className="flex min-h-0 flex-1 items-stretch border-b border-black">
        <span className={`flex w-[11px] items-center justify-center ${l.n === "bothcover" ? "bg-[#0a0a90]" : "bg-white"}`}>
          <input type="checkbox" className="h-[9px] w-[9px] appearance-none border-2 border-black bg-white" />
        </span>
        <span className="flex w-[14px] justify-end bg-black">
          <span className={`flex w-3 items-center justify-center ${l.chip ?? "bg-black"}`}>
            {l.n === "bothcover" && <svg width="10" height="10" viewBox="0 0 10 10" stroke="#fff" strokeWidth="2" fill="none"><path d="M1.500 8V1.500H8M2 2l7 7" /></svg>}
          </span>
        </span>
        <span className={`ml-px flex min-w-0 flex-1 items-center justify-between pl-px pr-0.5 text-[10px] font-bold leading-3 text-black ${l.bg}`}>
          {l.n}
          {l.hand && <svg width="7" height="6" viewBox="0 0 7 6"><path d="M0 2h3l1-2 1 2h2v2L5 6H2L1 4z" /></svg>}
          {l.n === "bothcover" && <svg width="5" height="5" viewBox="0 0 5 5"><path d="M0 0h5v5H0z" fill="#285a58" /></svg>}
        </span>
      </label>
    ))}
  </div>
);

const LayerPanel = () => (
  <div className={`flex w-[122px] shrink-0 flex-col border-r-2 border-[#b5f0e0] bg-[#55cfaf] ${cellFont}`}>
    <div className="mt-px h-[18px] whitespace-nowrap border-b-2 border-[#2c8c78] bg-[#9bdbd9] text-[12px] font-bold leading-4 text-black">Step: cad</div>
    <button type="button" className="mt-0.5 h-[23px] whitespace-nowrap border-y-2 border-b-[#2c8c78] border-t-[#c9f5ec] bg-[#9bdbd9] text-left text-[12px] font-bold leading-4 text-black">Job Matrix ...</button>
    <div className="mr-5 mt-0.5 flex flex-col gap-[3px] border-b-2 border-r-2 border-t-2 border-[#2c8c78] border-b-[#b5f0e0] pb-2 pr-[3px] pt-px">
      <LayerBlock list={layers} className="h-[220px]" />
      <LayerBlock list={drills} className="h-[29px]" />
      <LayerBlock list={others} className="h-[97px]" />
    </div>
  </div>
);

/* ---------- embedded picture: board drawing ---------- */

const Rects = ({ fill, d }: { fill: string; d: string }) => (
  <g fill={fill}>
    {d.trim().split(/\s+/).map((s, i) => {
      const [x, y, w, h] = s.split(",").map(Number);
      return <rect key={i} x={x} y={y} width={w} height={h} />;
    })}
  </g>
);

const Dots = ({ fill, d }: { fill: string; d: string }) => (
  <g fill={fill}>
    {d.trim().split(/\s+/).map((s, i) => {
      const [x, y, r] = s.split(",").map(Number);
      return <circle key={i} cx={x} cy={y} r={r} />;
    })}
  </g>
);

const matrix = (x: number, y: number, cols: number, rows: number, dx: number, dy: number, w: number, h: number, skip = 0) => {
  const out: string[] = [];
  for (let r = 0; r < rows; r++) for (let c = 0; c < cols; c++) if (!skip || (r * 7 + c * 5) % skip) out.push(`${x + c * dx},${y + r * dy},${w},${h}`);
  return out.join(" ");
};

const BLUE = "#1428e8";
const GREEN = "#4d9410";
const SKY = "#4cb4fa";
const RED = "#a82418";

const Board = () => (
  <svg width="807" height="564" viewBox="778 223 807 564" className="absolute left-0 top-0">
    <rect x="778" y="223" width="807" height="564" fill="#000" />
    <g stroke="#bdbdbd" strokeWidth="1.200">
      <path d="M1147 303L1437 524M1147 396L1414 525M1147 486L1414 549M1125 511L1437 554" fill="none" />
      <path d="M1281 625L1449 657M1281 641L1433 657M1281 728L1433 668M1286 787L1449 669" fill="none" />
    </g>
    <g transform="translate(1300 190) scale(.33333)">
      <path d="M342 1000V426H860" fill="none" stroke="#7c3a30" strokeWidth="4" />
      <path d="M342 459H860" stroke="#6f8f9c" strokeWidth="4" />
      <path d="M362 424L470 514M457 500h61v18h-61z" fill="none" stroke="#4b6b34" strokeWidth="3" />
      <g fontFamily="Noto Sans" fill="#6aa845" fontSize="19">
        <text x="350" y="374">Replace box with datecode YYWW</text>
        <text x="350" y="399">UL Logo 94V-0 and your UL-Number Exxxxx</text>
        <text x="362" y="424">Do not add any other name, logo or label !</text>
        <text x="172" y="453" fill="#d82222" fontSize="22">V-cut/scored.</text>
      </g>
      <path d="M280 461h42m-10-7l10 7-10 7" stroke="#c81e1e" strokeWidth="3" fill="none" />
      <Rects fill={SKY} d="456,460,172,23" />
      <Dots fill={SKY} d="375,493,15 375,526,7 793,493,14 793,918,14 425,562,10 412,571,8 483,571,8 507,563,10 411,621,9 425,630,10 483,622,8 507,631,10" />
      <Rects fill={BLUE} d="534,528,20,17 636,528,20,18 670,515,26,16 727,515,28,16 670,592,26,16 727,592,28,16 670,672,26,16 727,672,28,16 534,643,20,17 636,643,20,17" />
      <Rects fill={BLUE} d="388,703,14,32 470,706,15,29 551,703,15,32 635,706,13,28 388,765,14,26 470,765,15,28 551,763,15,28 635,766,13,27 388,807,14,28 470,807,15,28 551,807,15,28 635,807,13,28 388,865,14,28 470,865,15,28 551,863,15,28 635,865,13,28 388,906,14,28 662,906,15,28 834,840,20,12 834,870,20,14 846,815,10,9" />
      <Rects fill={GREEN} d="534,571,18,18 534,599,18,18 582,575,6,18 582,600,6,17 600,575,8,18 600,600,8,17 653,580,12,7 653,602,12,7 678,614,14,18 709,614,14,18 387,581,10,7 387,602,10,7 424,581,13,7 424,602,13,7 508,581,10,7 508,602,10,7 404,728,18,15 404,758,18,12 463,740,10,6 463,753,10,6 544,740,10,6 544,753,10,6 483,883,33,34" />
      <Rects fill="#4d8b2a" d="540,834,12,6 556,836,14,7 575,834,13,8 592,842,11,6 540,852,12,8 556,852,14,7 575,854,13,8 592,856,11,6 540,886,12,7 570,885,12,7 590,890,12,6 612,886,14,7 540,904,12,8 560,908,14,6 580,898,9,10 596,904,8,8 612,905,8,7" />
      <Rects fill="#3f7a20" d="412,888,6,8 412,905,6,8 424,870,6,12 428,890,6,8 428,907,6,8 437,870,6,8 442,886,6,8 442,905,6,8 444,922,6,8 414,922,6,8 418,940,6,8 444,940,6,8" />
      <Rects fill="#c4351f" d={matrix(502, 842, 3, 4, 9, 8, 5, 5) + " " + matrix(474, 896, 1, 4, 9, 8, 5, 5) + " " + matrix(520, 880, 1, 6, 9, 9, 5, 5) + " " + matrix(474, 925, 13, 1, 10, 9, 6, 5, 4)} />
      <Rects fill={RED} d={matrix(678, 510, 2, 2, 10, 23, 4, 4) + " " + matrix(735, 510, 2, 2, 10, 23, 4, 4) + " " + matrix(735, 587, 2, 2, 10, 23, 4, 4) + " " + matrix(735, 667, 2, 2, 10, 23, 4, 4) + " " + matrix(678, 636, 2, 3, 9, 8, 4, 4) + " " + matrix(678, 667, 2, 2, 10, 23, 4, 4) + " 638,522,4,6 650,522,4,6 638,546,4,6 650,546,4,6 394,738,4,4 475,738,4,4 560,738,4,4 640,738,4,4 394,836,4,4 640,836,4,4 466,817,4,4 490,817,4,4 548,817,4,4 572,817,4,4"} />
      <Rects fill={BLUE} d="468,935,10,18 493,935,10,18 518,935,10,18 543,935,10,18 567,935,10,18 592,935,10,18" />
    </g>
    <g transform="translate(1300 500) scale(.33333)">
      <path d="M342 0V831H450L474 861" fill="none" stroke="#7c3a30" strokeWidth="4" />
      <path d="M343 74h69v88h-69z" fill="#000" stroke="#e4e4e4" strokeWidth="4" />
      <Rects fill={GREEN} d="350,92,24,10 381,92,25,10 350,117,24,11 381,117,25,11" />
      <Rects fill="#dff" d="361,82,4,4 392,82,4,4 357,140,4,4 366,133,4,4" />
      <Dots fill={SKY} d="425,92,5 425,126,5 425,142,5 677,92,5 677,126,5 677,142,5 375,440,14 375,797,23 375,750,7 421,541,10 662,531,10 647,540,8 646,590,8 661,599,10 719,540,8 744,532,9 719,592,8 743,599,9 809,199,7 810,363,7 858,175,7 858,387,7 813,507,10 813,591,10 816,683,10" />
      <Rects fill={SKY} d="411,582,19,19 396,168,16,16 397,202,14,14 395,243,17,15 396,279,15,13 395,318,17,15 396,353,16,12 669,168,15,16 670,202,14,14 669,243,15,15 671,279,14,13 671,315,15,17 673,350,14,15 443,390,15,14 519,390,15,14 595,391,15,16 671,391,15,16 445,425,13,14 521,425,13,14 597,427,13,12 673,427,13,12" />
      <Rects fill={BLUE} d="389,37,14,22 664,37,14,26 469,6,10,18 493,6,10,18 518,6,10,18 543,6,10,18 567,6,10,18 592,6,10,18 795,51,14,16 795,74,14,16 795,103,14,15 468,210,8,18 493,210,10,18 518,210,10,18 543,210,10,18 567,210,10,18 473,246,11,38 508,246,11,38 577,243,31,34 603,298,22,9 603,340,22,8 498,500,18,17 600,500,20,17 498,615,18,17 600,615,20,17" />
      <Rects fill={GREEN} d="501,158,30,23 605,158,31,23 473,197,12,38 508,197,12,38 618,207,10,26 595,541,36,10 595,576,36,10 664,543,12,17 664,569,12,17 729,541,36,11 729,576,36,11 544,547,7,16 564,547,6,16 544,570,7,16 564,570,6,16 351,690,23,10 387,690,24,10 351,717,23,10 387,717,24,10" />
      <Rects fill="#9bd0f0" d="590,207,10,24" />
      <Rects fill="#c4351f" d={matrix(465, 236, 1, 6, 6, 7, 6, 4) + " " + matrix(530, 210, 2, 3, 7, 10, 5, 5) + " " + matrix(528, 232, 3, 1, 7, 7, 5, 7) + " " + matrix(602, 353, 3, 2, 9, 8, 6, 5) + " " + matrix(488, 496, 1, 4, 6, 8, 5, 4) + " " + matrix(488, 606, 1, 4, 6, 8, 5, 4) + " " + matrix(470, 34, 6, 1, 9, 6, 6, 4, 5) + " " + matrix(559, 252, 1, 5, 6, 6, 5, 4) + " 790,82,4,6 790,111,4,6 394,6,4,5 668,6,4,5"} />
      <Rects fill="#3348c8" d={matrix(528, 247, 2, 3, 14, 10, 10, 6) + " " + matrix(579, 279, 5, 1, 6, 6, 4, 10)} />
      <Rects fill="#5f8f2a" d={matrix(490, 292, 8, 3, 12, 9, 7, 6, 3) + " " + matrix(508, 317, 7, 3, 11, 10, 6, 7, 3) + " " + matrix(542, 342, 4, 4, 11, 9, 6, 5, 3) + " " + matrix(492, 240, 1, 5, 6, 10, 7, 4) + " 572,340,12,6 572,362,12,6"} />
      <Rects fill="#9cc4f4" d={matrix(816, 212, 4, 9, 10, 11, 6, 6) + " 818,326,5,5 842,326,5,5 816,338,5,5 846,338,5,5 826,344,5,5 836,344,5,5"} />
      <Rects fill="#4b7a20" d={matrix(790, 214, 2, 9, 11, 11, 8, 4, 4) + " " + matrix(798, 418, 2, 5, 11, 8, 8, 4) + " " + matrix(834, 418, 2, 5, 11, 8, 8, 4) + " " + matrix(806, 615, 4, 3, 12, 10, 8, 7, 4) + " " + matrix(840, 495, 1, 8, 8, 12, 8, 5) + " 845,700,8,10"} />
      <Rects fill={SKY} d="828,486,8,8 846,486,8,8 828,570,8,8 846,570,8,8 845,660,9,9 845,682,9,9" />
      <Rects fill="#c02020" d={matrix(798, 246, 2, 3, 8, 9, 4, 4) + " " + matrix(806, 422, 1, 6, 8, 8, 4, 4) + " " + matrix(826, 612, 2, 3, 14, 12, 4, 4)} />
      {/* lower component cluster */}
      <Rects fill="#3f86b8" d={matrix(432, 690, 8, 6, 8, 9, 5, 5, 3)} />
      <Rects fill="#c03028" d={matrix(438, 686, 10, 7, 13, 11, 5, 4, 3) + " " + matrix(614, 682, 8, 5, 12, 9, 5, 4, 3) + " " + matrix(480, 756, 8, 2, 13, 14, 5, 4, 3) + " 696,676,4,5 720,678,4,5 786,764,4,5 786,790,4,5 786,816,4,5"} />
      <Rects fill="#5f8f2a" d={matrix(480, 676, 5, 4, 16, 14, 7, 7, 3)} />
      <Rects fill={GREEN} d="505,694,16,18 538,670,13,16 538,732,13,14 648,686,16,16 480,764,15,22 512,767,14,20 538,762,16,26 570,764,16,16 602,750,18,23 648,750,18,23 602,800,18,23 648,800,18,23 602,847,16,14 648,847,18,14" />
      <Rects fill={BLUE} d="565,698,10,12 565,718,10,12 476,741,16,9 501,741,16,9 697,727,37,12 700,745,30,10 700,773,32,10 621,757,13,36 640,757,10,36 663,757,13,36 621,806,13,36 640,806,10,36 663,806,13,36 483,829,12,32 504,829,12,32 526,829,12,32 765,744,18,102" />
      <Rects fill="#86c4f4" d="583,690,13,23 607,686,16,26 695,682,17,27 722,680,15,26 649,752,14,20 649,802,14,20 702,756,28,8 766,790,12,6 766,806,12,6 766,822,12,6" />
      <Rects fill="#5c8c28" d={matrix(522, 800, 3, 5, 14, 11, 7, 8, 4) + " " + matrix(690, 768, 2, 7, 13, 14, 8, 7, 4) + " " + matrix(732, 748, 3, 10, 13, 11, 9, 6, 5)} />
      <path d="M400 471h49v38h-49z" fill="#000" stroke="#e4e4e4" strokeWidth="4" />
      <Rects fill="#fff" d="412,491,4,4 424,482,4,4" />
    </g>
  </svg>
);

/* ---------- popview windows ---------- */

const WinIcon = () => (
  <svg width="14" height="14" viewBox="0 0 14 14" className="shrink-0">
    <path d="M0 0h14v14H0z" fill="#f4f4ee" stroke="#333" />
    <path d="M0 0h14v3H0z" fill="#10107c" />
    <path d="M4 5l6 7M10 5l-6 7" stroke="#a8a818" strokeWidth="1.800" />
  </svg>
);

const popIcons = [
  "M4 8h8v7H4zM13 4h4v4h-4zM12 12h3V8M6 11h4m-2-1v3",
  "M8 9H4v8h13V9h-4",
  "M8 12H4V4h13v8h-4",
  "M9 7V4h8v13H9v-3",
  "M12 7V4H4v13h8v-3",
  "M8 8h5v5H8z",
  "M8 8h5v5H8z",
];
const popFills = [
  "",
  "M10.500 3l4.500 4h-1.500v6h-6V7H6z",
  "M10.500 18l4.500-4h-1.500V8h-6v6H6z",
  "M3 10.500L7 6v1.500h6v6H7V15z",
  "M18 10.500L14 6v1.500H8v6h6V15z",
  "M5.500 3h10l-5 5zM5.500 18h10l-5-5zM3 5.500v10l5-5zM18 5.500v10l-5-5z",
  "M10.500 2.500l3.500 4H7zM10.500 18.500l3.500-4H7zM2.500 10.500l4-3.500v7zM18.500 10.500l-4-3.500v7z",
];
const popLabels = ["Zoom window", "Pan up", "Pan down", "Pan left", "Pan right", "Zoom out", "Zoom in"];

const PopTools = () => (
  <div className="flex w-7 shrink-0 flex-col gap-px">
    {popIcons.map((d, i) => (
      <button key={i} type="button" aria-label={popLabels[i]} className="flex h-[29px] w-7 shrink-0 items-center justify-center border-2 border-b-[#3f9480] border-l-[#b8f5ea] border-r-[#3f9480] border-t-[#b8f5ea] bg-[#7fd4c6]">
        <svg width="20" height="20" viewBox="0 0 21 21">
          <path d="M1.500 1.500h18v18h-18z" fill="#93dad4" stroke="#163c3c" />
          <path d={d} fill="none" stroke="#000" strokeWidth="1.800" />
          <path d={popFills[i]} fill="#000" />
        </svg>
      </button>
    ))}
  </div>
);

const Popview = ({ n, className, frame, xClass, children, close }: { n: number; className: string; frame: string; xClass: string; children: React.ReactNode; close?: boolean }) => (
  <section className={`absolute flex flex-col rounded-[5px] border border-[#8d9090] px-1.5 pb-[5px] ${frame} ${className}`}>
    <div className="-mr-1 flex h-6 items-center gap-1.5">
      <WinIcon />
      <h3 className={`${ui} rounded-full bg-white/20 pr-2 text-[12px] leading-4 text-[#0a0a0a] shadow-[0_0_8px_4px_rgba(255,255,255,0.2)]`}>Popview - {n}</h3>
      <button type="button" aria-label="Close window" className={`mb-auto ml-auto flex h-4 w-[41px] items-center justify-center rounded-b-[4px] border border-t-0 ${xClass}`}>
        <svg width="9" height="8" viewBox="0 0 9 8"><path d="M1.500.500l6 7M7.500.500l-6 7" stroke="#fff" strokeWidth="2.200" /></svg>
      </button>
    </div>
    <div className="flex min-h-0 flex-1 gap-0.5 overflow-hidden border border-[#2f6d60] bg-black">
      <div className="min-w-0 flex-1 border-b-2 border-r-2 border-t border-b-[#b8f0e4] border-r-[#b8f0e4] border-t-[#2f6d60] bg-black">{children}</div>
      <PopTools />
    </div>
    {close && (
      <button type="button" className={`mt-px h-[25px] shrink-0 border-2 border-b-[#3f9480] border-l-[#c9f8f0] border-r-[#3f9480] border-t-[#c9f8f0] bg-[#9bdbd9] text-[12px] font-bold leading-5 text-black ${cellFont}`}>Close</button>
    )}
  </section>
);

const stripNumbers = Array.from({ length: 35 }, (_, i) => i + 4);

const EmbeddedPicture = () => (
  <div className="absolute bottom-0 left-[637px] right-0 top-[39px] overflow-hidden border-l border-t border-[#5d7a94] bg-black">
    <div className="flex h-full">
      <div className={`w-[18px] shrink-0 overflow-hidden border-r border-[#9eb6ce] bg-[#dfe8f4] ${serif}`}>
        <div className="flex h-[567px] flex-col pt-0.5 text-[14px] leading-4 text-[#5b6b84]">
          {stripNumbers.map((v) => (
            <div key={v} className="flex min-h-0 flex-1 items-center justify-start border-b border-[#a9bdd6]">
              <span className="flex w-1.5 justify-center">{v}</span>
            </div>
          ))}
        </div>
      </div>
      <LayerPanel />
      <div className="relative min-w-0 flex-1 overflow-hidden">
        <Board />
        <Popview n={1} close className="left-[106px] top-5 h-[266px] w-[263px]" frame="bg-linear-to-b from-[#4a4d4f] from-2% via-[#1c1e1f] via-10% to-[#0c0c0c]" xClass="border-[#777] bg-[#333]/70">
          <svg width="216" height="206" viewBox="892 271 216 206" className="block">
            <path d="M913 272V477" stroke="#5a3426" strokeWidth="1.500" />
            <Dots fill="#00ffff" d="963,293,7.500 1037.500,292,7.500 977,415,8 952,432,7.500" />
            <Rects fill="#4a9803" d="935.500,309,57,24 1009,309,57,24 935.500,374,57,23 1009,374,57,23" />
            <g fill={SKY}>
              <ellipse cx="1107" cy="311" rx="9" ry="12" />
              <ellipse cx="1107" cy="389" rx="9" ry="12" />
              <ellipse cx="1107" cy="429" rx="9" ry="12" />
            </g>
          </svg>
        </Popview>
        <Popview n={2} className="left-[263px] top-[364px] h-[266px] w-[240px]" frame="bg-linear-to-b from-[#8b8e90] from-2% via-[#4b5054] via-12% to-[#2a2c2e]" xClass="border-[#e0b0a8] bg-linear-to-b from-[#e07a68] via-[#c43320] to-[#a02818]">
          <svg width="194" height="172" viewBox="1049 615 194 172" className="block">
            <Dots fill="#00ffff" d="1153,701,13 1111,739,13" />
          </svg>
        </Popview>
      </div>
    </div>
  </div>
);

/* ---------- annotations on the sheet ---------- */

const Annotations = () => (
  <>
    <div className="absolute left-[344px] top-[62px] h-[41px] w-[243px] border-[3px] border-[#22e622] shadow-[2px_3px_4px_rgba(0,0,0,0.45),inset_2px_3px_4px_rgba(0,0,0,0.35)]" />
    <div className="absolute left-[92px] top-[82px] h-6 w-[78px] border-[3px] border-[#22e622] shadow-[2px_3px_4px_rgba(0,0,0,0.45),inset_2px_3px_4px_rgba(0,0,0,0.35)]" />
    <svg width="60" height="170" viewBox="440 270 60 170" className="absolute left-[440px] top-[86px]">
      <path d="M478 274q2-3 5 0l5 26-2 4h-7l-19 136h-7l17-136h-4l-1-4z" fill="#00f000" />
      <path d="M478 274q2-3 5 0l4 14h-13z" fill="#00a800" />
    </svg>
    <div className="absolute left-[338px] top-[252px] h-[83px] w-[276px] border-[3px] border-[#0808c8] bg-white pr-1 pt-1 text-center text-[17px] font-bold leading-[17px] text-[#df0a82]">
      此处的小开窗　请确认清楚（是挡
      <br />
      点还是开小窗）
    </div>
    <svg width="12" height="12" viewBox="0 0 12 12" className="absolute left-[631px] top-[33px]"><circle cx="6" cy="6" r="4.500" fill="#e8fbff" stroke="#70808c" /></svg>
    <svg width="10" height="10" viewBox="0 0 10 10" className="absolute left-[632px] top-[350px]"><path d="M1 1h8v8H1z" fill="#d4f0f8" stroke="#70909c" /></svg>
    <svg width="10" height="26" viewBox="0 0 10 26" className="absolute left-[1234px] top-[18px]"><path d="M2 1h6M5 1v17" stroke="#5c86a0" /><path d="M1.500 17.500h7v7h-7z" fill="#d4f0f8" stroke="#70909c" /></svg>
  </>
);

const VScroll = () => (
  <div className="flex w-[15px] shrink-0 flex-col items-center bg-linear-to-r from-[#6f92c4] via-[#86a6d2] to-[#6f92c4] py-0.5">
    <div className="h-1 w-3 border border-[#6c87ad] bg-white" />
    <svg width="9" height="5" viewBox="0 0 9 5" className="mt-1.5"><path d="M4.500 0L9 5H0z" fill="#2c4a80" /></svg>
    <div className="mt-14 flex h-[174px] w-[13px] items-center justify-center rounded-[2px] border border-[#5773a4] bg-linear-to-r from-[#f4f7fc] to-[#c2cfe2]">
      <svg width="8" height="8" viewBox="0 0 8 8"><path d="M0 .500h8M0 3h8M0 5.500h8M0 7.500h8" stroke="#7286a6" /></svg>
    </div>
    <svg width="9" height="5" viewBox="0 0 9 5" className="mb-1 mt-auto"><path d="M0 0h9L4.500 5z" fill="#2c4a80" /></svg>
  </div>
);

/* ---------- sheet tabs and status ---------- */

const SheetTab = ({ name, wide }: { name: string; wide?: boolean }) => (
  <button type="button" className={`relative flex h-4 shrink-0 items-center justify-center bg-linear-to-b from-[#e6f0fd] to-[#c4daf6] leading-4 ${wide ? "w-[43px]" : "w-9"}`}>
    <svg width="11" height="16" viewBox="0 0 11 16" className="absolute -left-1.5 top-0"><path d="M10 0L1 14" stroke="#7895c0" /><path d="M0 9v6h4z" fill="#8fa9cf" /></svg>
    <span>{name}</span>
  </button>
);

const TabStrip = () => (
  <div className="flex h-4 shrink-0 items-stretch overflow-hidden border-t border-[#7f9dc8] bg-[#9db7dc]">
    <div className="flex w-[59px] items-center justify-around bg-linear-to-b from-[#dceafb] to-[#b8d0f0] px-1">
      {["M1 0v8M8 0L3 4l5 4z", "M7 0L3 4l4 4z", "M2 0l4 4-4 4z", "M8 0v8M1 0l5 4-5 4z"].map((d) => (
        <button key={d} type="button" aria-label="Scroll tabs"><svg width="9" height="8" viewBox="0 0 9 8"><path d={d} fill="#123c86" stroke="#123c86" strokeWidth=".8" /></svg></button>
      ))}
    </div>
    <div className={`${serif} flex text-[14px] text-[#1c3e7c]`}>
      <button type="button" className="w-[59px] bg-white text-center leading-4">Sheet1</button>
      {[1, 2, 3, 4, 5, 6, 7, 8, 9, 10, 11].map((i) => <SheetTab key={i} name={`图${i}`} wide={i > 9} />)}
      <div className="relative flex w-[42px] items-center justify-center bg-linear-to-b from-[#e6f0fd] to-[#c4daf6] pr-2 [clip-path:polygon(0_0,100%_0,76%_100%,0_100%)]">
        <svg width="15" height="13" viewBox="0 0 15 13"><path d="M4 4h10v6l-3 2H4z" fill="#fff" stroke="#5875a8" /><path d="M4 0v8M0 4h8M1 1l6 6M7 1L1 7" stroke="#e8a020" /></svg>
      </div>
    </div>
    <div className="ml-auto flex w-[648px] items-stretch bg-[#7797c6]">
      <div className="w-1.5 border border-[#5773a4] bg-white" />
      <svg width="14" height="16" viewBox="0 0 14 16"><path d="M9 3v9L4 7.500z" fill="#2c4a80" /></svg>
      <div className="flex w-[455px] items-center justify-center rounded-[2px] border border-[#5773a4] bg-linear-to-b from-[#eef3fa] to-[#b9c8de]">
        <svg width="8" height="8" viewBox="0 0 8 8"><path d="M.5 0v8M3 0v8M5.500 0v8M7.500 0v8" stroke="#7286a6" /></svg>
      </div>
      <svg width="14" height="16" viewBox="0 0 14 16" className="ml-auto mr-1"><path d="M5 3v9l5-4.500z" fill="#2c4a80" /></svg>
      <div className="mr-[15px] w-[5px] border border-[#5773a4] bg-white" />
    </div>
  </div>
);

const StatusBar = () => (
  <footer className="flex h-[21px] shrink-0 items-center border-t border-[#6d93cc] bg-linear-to-b from-[#dbe8fb] via-[#bfd6f7] to-[#d8e6fa] text-[12px] leading-5 text-[#15428b]">
    <span className="w-[41px] border-r border-[#8fb0de] pl-[7px]">就绪</span>
    <div className="ml-auto flex h-full items-center gap-2 border-l border-[#f3f8ff] bg-linear-to-b from-[#9fc0ee] to-[#7fa6de] pl-1.5 pr-[5px]">
      <div className="flex h-[18px] items-center divide-x divide-[#9fb5d6] border border-[#8fabd2] bg-[#dfe7f2]">
        <button type="button" aria-label="普通" className="flex h-4 w-[18px] items-center justify-center bg-[#fbd58c]"><svg width="13" height="11" viewBox="0 0 13 11"><path d="M.5.500h12v10H.5zM.5 4h12M.5 7h12M4.500.500v10M8.500.500v10" fill="#fff" stroke="#6d6d6d" /></svg></button>
        <button type="button" aria-label="页面布局" className="flex h-4 w-[18px] items-center justify-center"><svg width="12" height="12" viewBox="0 0 12 12"><path d="M.5.500h11v11H.5z" fill="#b6b6b6" stroke="#6d6d6d" /><path d="M3.500 2.500h5v7h-5z" fill="#fff" stroke="#555" /></svg></button>
        <button type="button" aria-label="分页预览" className="flex h-4 w-[18px] items-center justify-center"><svg width="12" height="12" viewBox="0 0 12 12"><path d="M.5.500h11v11H.5z" fill="#d9d9d9" stroke="#6d6d6d" /><path d="M4.500 0v8h3V0" fill="#fff" stroke="#555" /></svg></button>
      </div>
      <span className="w-7 text-center">85%</span>
      <div className="flex items-center">
        <button type="button" aria-label="缩小" className="ml-1.5"><svg width="16" height="16" viewBox="0 0 16 16"><circle cx="8" cy="8" r="7" fill="#eef3fb" stroke="#4c6590" /><path d="M4 8h8" stroke="#2f446c" strokeWidth="2" /></svg></button>
        <label className="relative flex w-[102px] items-center">
          <span className="h-px w-full bg-[#f2f7ff]" />
          <input type="range" aria-label="缩放" defaultValue={42} className="absolute inset-0 w-full opacity-0" />
          <svg width="11" height="12" viewBox="0 0 11 12" className="absolute left-[38px]"><path d="M1 1h9v6L5.500 11 1 7z" fill="#eef3fb" stroke="#4c6590" /><path d="M5.500 3v4" stroke="#4c6590" /></svg>
          <span className="absolute left-[52px] h-1.5 w-px bg-[#f2f7ff]" />
        </label>
        <button type="button" aria-label="放大"><svg width="16" height="16" viewBox="0 0 16 16"><circle cx="8" cy="8" r="7" fill="#eef3fb" stroke="#4c6590" /><path d="M4 8h8M8 4v8" stroke="#2f446c" strokeWidth="2" /></svg></button>
      </div>
    </div>
  </footer>
);

/* ---------- taskbar ---------- */

const raised = "border border-b-[#404040] border-l-white border-r-[#404040] border-t-white shadow-[inset_-1px_-1px_0_#808080]";

const IE = () => (
  <svg width="15" height="15" viewBox="0 0 15 15"><circle cx="7.500" cy="7.500" r="7" fill="#49b83a" /><path d="M3.500 7.500h8C11.500 3 4 2.500 3.800 7.500c0 4.500 6 5 7.500 2" fill="none" stroke="#fff" strokeWidth="1.800" /></svg>
);
const XlsIcon = () => (
  <svg width="16" height="16" viewBox="0 0 16 16"><path d="M5.500.500h8l2 2v12h-10z" fill="#fff" stroke="#6a8a6a" /><path d="M0 3h10v10H0z" fill="#1d7a2e" /><path d="M2.500 5l5 6M7.500 5l-5 6" stroke="#fff" strokeWidth="1.800" /></svg>
);
const Star = () => <svg width="16" height="16" viewBox="0 0 16 16"><path d="M8 0l2.200 4.800L16 5.500l-4 4 1 6L8 13l-5 2.500 1-6-4-4 5.800-.7z" fill="#f08a24" /><circle cx="8" cy="8.500" r="2.500" fill="#ffe2a8" /></svg>;
const TC = () => <svg width="16" height="16" viewBox="0 0 16 16"><path d="M0 0h16v16H1.500L0 14.500z" fill="#1c35b8" /><path d="M4 0h8v5H4z" fill="#dfe6f5" /><path d="M2 8h12v7H2z" fill="#fff" /><path d="M2 9.500h12M2 12.500h12" stroke="#d02020" strokeWidth="1.500" /></svg>;
const Scroll = () => <svg width="16" height="16" viewBox="0 0 16 16"><path d="M2 1h10v3l-2 1v7h5v3H4l-1-3V5z" fill="#cfe0f0" stroke="#5d7fa3" /><path d="M5 4h4M5 7h4M5 10h4" stroke="#6f96bb" /></svg>;
const Note = () => <svg width="14" height="15" viewBox="0 0 14 15"><path d="M0 0h14v15H0z" fill="#fff" /><path d="M1 2h12M1 5h12M1 8h12M1 11h12M1 14h12" stroke="#3aa0dc" strokeWidth="1.500" /></svg>;
const PIcon = () => <svg width="14" height="16" viewBox="0 0 14 16"><path d="M3 15L5 3h4c5 0 3 6-1 6H5" fill="none" stroke="#1f9a4a" strokeWidth="3" /><path d="M1 14L3 1" stroke="#8fd3a8" strokeWidth="2" /></svg>;
const FIcon = () => <svg width="15" height="16" viewBox="0 0 15 16"><rect width="15" height="16" rx="2" fill="#174f9e" /><path d="M4 13V8q0-4 8-4M4 9h6" fill="none" stroke="#fff" strokeWidth="2.500" /></svg>;
const CalcIcon = () => <svg width="12" height="15" viewBox="0 0 12 15"><path d="M.5.500h11v14H.5z" fill="#f2f7fc" stroke="#7da3cc" /><path d="M2 2h8v3H2z" fill="#7db8e8" /><path d="M2 7h2v2H2zM5 7h2v2H5zM8 7h2v2H8zM2 10h2v3H2zM5 10h2v3H5z" fill="#9db4cc" /><path d="M8 10h2v3H8z" fill="#f08a24" /></svg>;
const Gecko = () => <svg width="16" height="15" viewBox="0 0 16 15"><circle cx="7" cy="7" r="7" fill="#1a6f92" /><path d="M3 7c3-4 6-3 9 0l4 5H8z" fill="#5ac8c0" /><circle cx="6" cy="6" r="1.500" fill="#fff" /></svg>;
const Pad = () => <svg width="13" height="15" viewBox="0 0 13 15"><path d="M.5 2.500h12v12H.5z" fill="#bfe8f0" stroke="#4a90a8" /><path d="M2 0v4M5 0v4M8 0v4M11 0v4" stroke="#555" /></svg>;

const Task = ({ icon, text, className = "" }: { icon: React.ReactNode; text: string; className?: string }) => (
  <button type="button" className={`flex h-[22px] min-w-0 items-center gap-1 pl-1 pr-1 text-left text-[12px] leading-4 text-black ${raised} ${className}`}>
    <span className="flex w-4 shrink-0 justify-center">{icon}</span>
    <span className="min-w-0 flex-1 overflow-hidden whitespace-pre font-[Roboto,'Noto_Sans_CJK_SC',sans-serif]">{text}</span>
  </button>
);

const Taskbar = () => (
  <div className="flex h-10 shrink-0 overflow-hidden border-t border-white bg-[#d4d0c8] pt-[3px]">
    <div className="flex w-[107px] shrink-0 flex-col border-r border-[#808080]">
      <button type="button" className={`ml-0.5 flex h-[22px] w-12 shrink-0 items-center gap-px whitespace-nowrap pl-px text-[12px] leading-4 text-black ${raised}`}>
        <svg width="17" height="15" viewBox="0 0 17 15"><path d="M2 2q3-2 6 0L7 7q-3-2-6 0z" fill="#e8502a" /><path d="M9 3q3 2 6 0l-1 5q-3 2-6 0z" fill="#6cba2c" /><path d="M1 8q3-2 6 0l-1 5q-3-2-6 0z" fill="#3c80d8" /><path d="M8 9q3 2 6 0l-1 5q-3 2-6 0z" fill="#f4bc20" /></svg>
        开始
      </button>
      <svg width="18" height="16" viewBox="0 0 18 16" className="ml-[67px] mt-1 shrink-0"><circle cx="5" cy="7" r="4.500" fill="#7ac043" /><circle cx="12" cy="6" r="4" fill="#4d8fe0" stroke="#dfe8f8" /></svg>
    </div>
    <div className="min-w-0 flex-1 pl-2">
      <div className="flex h-[22px]">
        <div className="flex w-[69px] shrink-0 items-center gap-[18px] pl-2">
          <svg width="16" height="15" viewBox="0 0 16 15"><path d="M1 3Q5 0 13 1l-4 4 6 3Q12 6 4 7z" fill="#86c440" /><path d="M2 8h10l4 1-5 5H1l5-3z" fill="#3cb4d8" /></svg>
          <svg width="16" height="16" viewBox="0 0 16 16"><path d="M0 0h16v16H0z" fill="#b81414" /><path d="M3 12c3-1 5-5 4.500-9C8 8 11 10 13.500 10 10 9 6 10 3 12z" fill="none" stroke="#fff" strokeWidth="1.300" /></svg>
        </div>
        <Task icon={<CalcIcon />} text="计算器" className="w-[148px]" />
        <span className="flex w-9 shrink-0 items-center justify-center"><IE /></span>
        <div className="flex min-w-0 gap-0.5">
          <Task icon={<Star />} text="兴森快捷衡阳分公司..." className="w-[148px]" />
          <Task icon={<TC />} text="[2] Total Commander ..." className="w-[147px]" />
          <Task icon={<Scroll />} text="Lister - [E:\input\孔表..." className="w-[147px]" />
          <Task icon={<Note />} text="制作规范 (Ver:1.0.6)" className="w-[148px]" />
          <Task icon={<PIcon />} text="工程系统  版本：1...." className="w-[147px]" />
          <Task icon={<FIcon />} text="李侠" className="w-[147px]" />
          <Task icon={<XlsIcon />} text="CV08500KA0制作单...." className="w-[147px]" />
        </div>
      </div>
      <div className="mt-[3px] flex gap-0.5">
        <Task icon={<XlsIcon />} text="CV08500KA0-预审指..." className="w-[160px] bg-[#f2f1ee] font-bold" />
        <Task icon={<Gecko />} text="get.exe" className="w-[159px]" />
        <Task icon={<WinIcon />} text="Engineering Toolkit 9.07" className="w-[159px]" />
        <Task icon={<WinIcon />} text="Progress" className="w-[159px]" />
        <Task icon={<WinIcon />} text="Graphic Editor 9.07b2 (0" className="w-[159px]" />
        <Task icon={<WinIcon />} text="Dialog Box" className="w-[159px]" />
        <Task icon={<Gecko />} text="CAM_Guide v2.81" className="w-[159px]" />
        <Task icon={<Pad />} text="cv08500ka0.txt - 记事本" className="w-[160px]" />
      </div>
    </div>
    <div className="ml-2 flex w-[31px] shrink-0 flex-col items-center gap-1.5 border-l border-[#808080] pt-1">
      <svg width="16" height="13" viewBox="0 0 16 13"><path d="M.5 5.500h15v7H.5zM2 8h12M2 10.500h12M8 5c0-3 5-1 6-4" fill="none" stroke="#777" /></svg>
      <svg width="9" height="7" viewBox="0 0 9 7" fill="none" stroke="#000"><path d="M.5 2.500h5v4h-5zM3 2V.500h5v4H6" /></svg>
    </div>
    <div className="grid w-[145px] shrink-0 grid-cols-[18px_22px_26px_1fr_18px] content-start items-center justify-items-center gap-y-0.5 border border-b-0 border-l-[#808080] border-r-white border-t-[#808080] text-[12px] leading-4 text-black">
      <svg width="7" height="9" viewBox="0 0 7 9" fill="none" stroke="#000" strokeWidth="1.300"><path d="M.5 4l3-3 3 3M.5 8l3-3 3 3" /></svg>
      <svg width="15" height="15" viewBox="0 0 15 15" className="mt-0.5"><path d="M1 2h8v12H1z" fill="#fff" stroke="#555" /><path d="M7 4h7v4l-2 2H9L7 8z" fill="#fff" stroke="#333" /><path d="M9 1v3M12 1v3M10.500 10v4" stroke="#333" /></svg>
      <svg width="16" height="13" viewBox="0 0 16 13" className="mt-0.5"><path d="M1 10h2v2H1zM4 8h2v4H4zM7 6h2v6H7zM10 3.500h2V12h-2zM13 1h2v11h-2z" fill="#fff" stroke="#777" strokeWidth=".8" /></svg>
      <time className="mt-1.5">21:52</time>
      <span />
      <span />
      <svg width="15" height="14" viewBox="0 0 15 14"><path d="M13 1C6 1 3 5 1 12M13 4C9 4 8 8 11 12" fill="none" stroke="#e82020" strokeWidth="3" /></svg>
      <svg width="16" height="14" viewBox="0 0 16 14" fill="#fff" stroke="#777"><path d="M1 5h3l4-4v12L4 9H1zM10 4q2 3 0 6M12.500 2q4 5 0 10" /></svg>
      <span className="whitespace-nowrap">星期四</span>
      <span className="h-3 w-3 bg-[#2c58a8]" />
    </div>
  </div>
);

export default function App() {
  return (
    <div className={`flex h-screen min-h-0 w-full flex-col overflow-hidden bg-white ${ui}`}>
      <TitleBar />
      <TabRow />
      <Ribbon />
      <FormulaBar />
      <main className="flex min-h-0 flex-1">
        <div className="relative min-w-0 flex-1 overflow-hidden">
          <Grid />
          <EmbeddedPicture />
          <Controls />
          <Annotations />
        </div>
        <VScroll />
      </main>
      <TabStrip />
      <StatusBar />
      <Taskbar />
    </div>
  );
}
